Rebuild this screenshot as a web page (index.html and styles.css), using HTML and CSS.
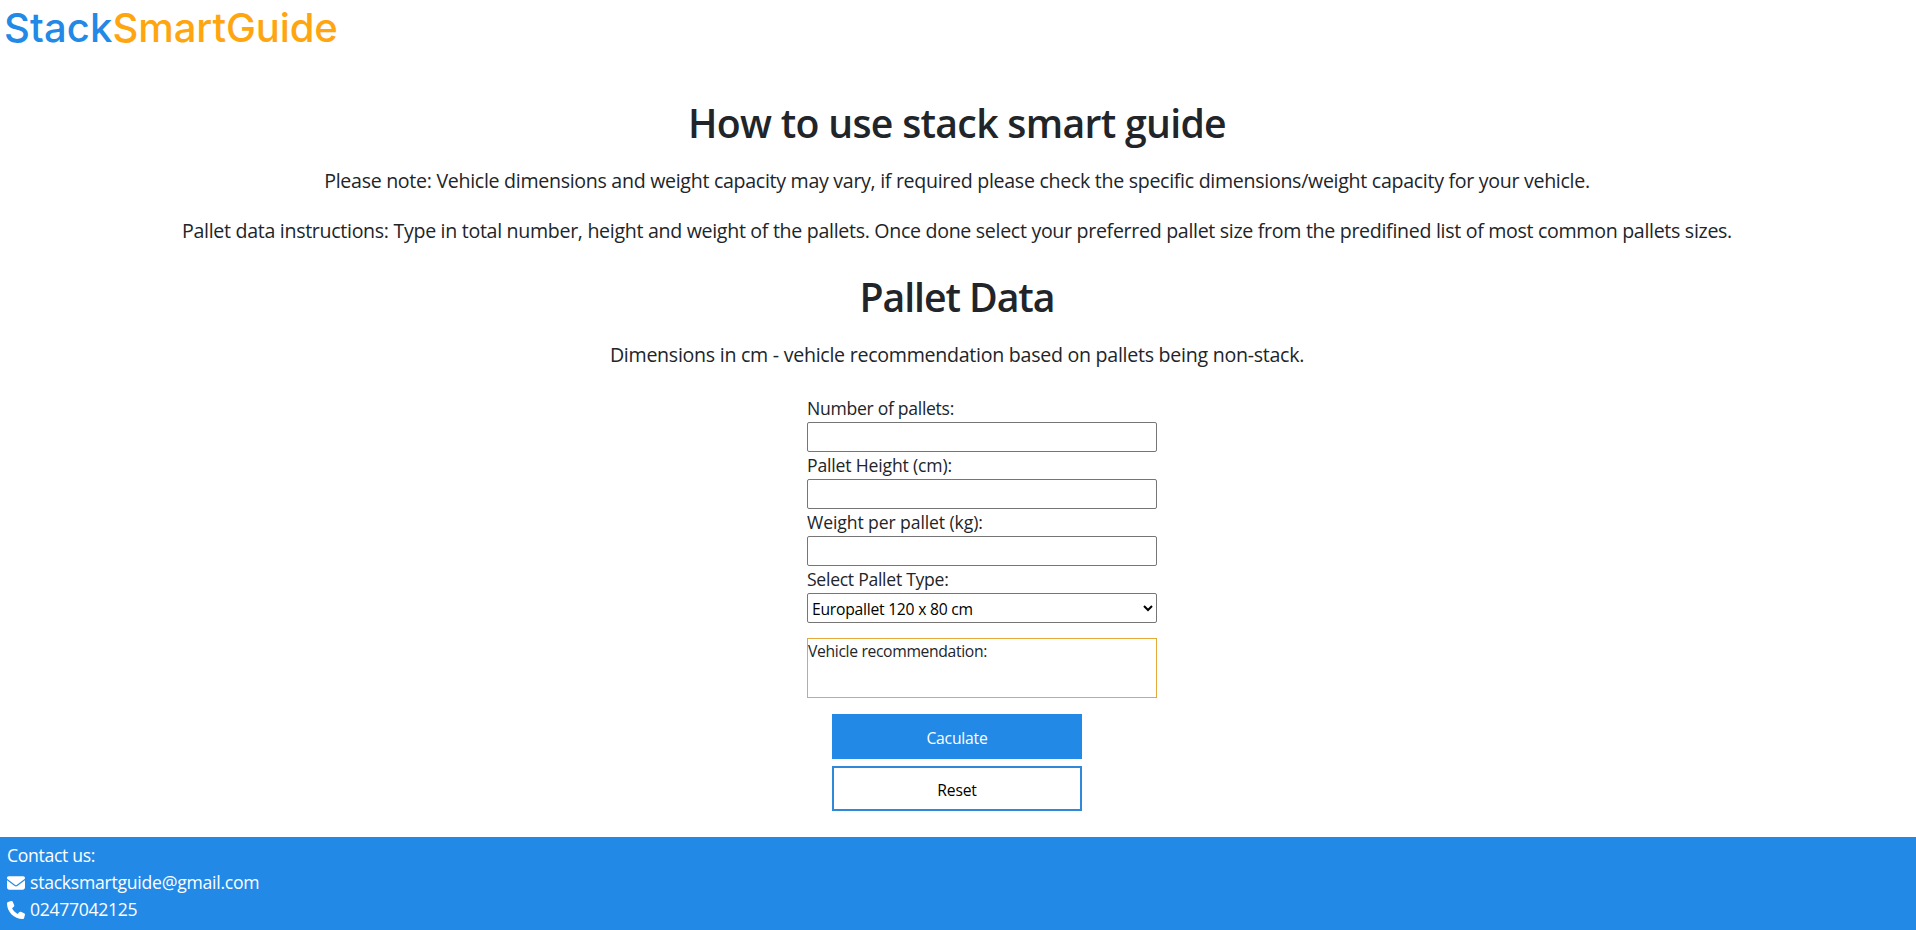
FILE: index.html
```html
<!DOCTYPE html>
<html lang="en">
<head>
<meta charset="utf-8">
<title>StackSmartGuide</title>
<link rel="stylesheet" href="styles.css">
</head>
<body>
<header class="header"><a class="logo"><span class="logo-stack">Stack</span><span class="logo-guide">SmartGuide</span></a></header>
<main class="main">
  <h1 class="title">How to use stack smart guide</h1>
  <p class="lead note">Please note: Vehicle dimensions and weight capacity may vary, if required please check the specific dimensions/weight capacity for your vehicle.</p>
  <p class="lead">Pallet data instructions: Type in total number, height and weight of the pallets. Once done select your preferred pallet size from the predifined list of most common pallets sizes.</p>
  <h2 class="title title-data">Pallet Data</h2>
  <p class="lead dimensions">Dimensions in cm - vehicle recommendation based on pallets being non-stack.</p>
  <form class="form">
    <div class="fields">
      <label class="label label-count" for="count">Number of pallets:</label>
      <input class="field" id="count" type="text">
      <label class="label label-height" for="height">Pallet Height (cm):</label>
      <input class="field" id="height" type="text">
      <label class="label label-weight" for="weight">Weight per pallet (kg):</label>
      <input class="field" id="weight" type="text">
      <label class="label label-type" for="type">Select Pallet Type:</label>
      <select class="field select" id="type"><option>Europallet 120 x 80 cm</option></select>
      <div class="result">Vehicle recommendation:</div>
    </div>
    <button class="button button-primary" type="button">Caculate</button>
    <button class="button button-outline" type="reset">Reset</button>
  </form>
</main>
<footer class="footer">
  <div class="contact">Contact us:</div>
  <div class="contact contact-email"><svg class="icon" viewBox="0 0 512 512"><path d="M48 64C21.500 64 0 85.500 0 112c0 15.100 7.100 29.300 19.200 38.400L236.800 313.600c11.400 8.500 27 8.500 38.400 0L492.800 150.400c12.100-9.100 19.200-23.300 19.200-38.400c0-26.500-21.500-48-48-48H48zM0 176V384c0 35.300 28.700 64 64 64H448c35.300 0 64-28.700 64-64V176L294.400 339.200c-22.800 17.100-54 17.100-76.800 0L0 176z"/></svg>stacksmartguide@gmail.com</div>
  <div class="contact"><svg class="icon" viewBox="0 0 512 512"><path d="M164.900 24.600c-7.700-18.600-28-28.500-47.400-23.200l-88 24C12.100 30.200 0 46 0 64C0 311.400 200.600 512 448 512c18 0 33.800-12.100 38.600-29.500l24-88c5.300-19.400-4.600-39.700-23.200-47.400l-96-40c-16.300-6.800-35.200-2.100-46.300 11.600L304.700 368C234.300 334.700 177.300 277.700 144 207.300L193.300 167c13.700-11.200 18.400-30 11.600-46.300l-40-96z"/></svg>02477042125</div>
</footer>
</body>
</html>
```
FILE: styles.css
```css
* { box-sizing: border-box; }
body {
  margin: 0;
  min-height: 930px;
  display: flex;
  flex-direction: column;
  background: #fff;
  color: #212529;
  font-family: "Open Sans", sans-serif;
  font-size: 17.6px;
  line-height: 27px;
}

.header { height: 99px; padding-left: 4px; }
.logo { display: block; font: 450 40px/56px Inter, sans-serif; letter-spacing: -0.1px; white-space: nowrap; }
.logo-stack { color: #2389e7; letter-spacing: 0.15px; }
.logo-guide { color: #ffa50f; }

.main { display: flex; flex-direction: column; align-items: center; padding-right: 2px; }
.title { margin: 0; font-size: 39.2px; line-height: 48px; font-weight: 600; letter-spacing: -0.7px; }
.title-data { margin-top: 27px; letter-spacing: -1.06px; }
.lead { margin: 20px 0 0; font-size: 19.6px; line-height: 30px; letter-spacing: -0.31px; white-space: nowrap; }
.note { margin-top: 19px; letter-spacing: -0.3px; }
.dimensions { margin-top: 19px; letter-spacing: -0.27px; }

.form { display: flex; flex-direction: column; align-items: center; width: 300px; margin-top: 25px; }
.fields { display: flex; flex-direction: column; width: 350px; margin-right: -50px; }
.label-count { letter-spacing: -0.3px; }
.label-height { letter-spacing: -0.17px; }
.label-weight { letter-spacing: -0.1px; }
.label-type { letter-spacing: -0.28px; }
.field { width: 350px; height: 30px; margin: 0; border: 1px solid #767676; border-radius: 2px; background: #fff; }
.select { padding: 1px 0 0; color: #000; font: 15.7px "Open Sans", sans-serif; letter-spacing: -0.25px; }
.result { height: 60px; margin: 15px 0 16px; border: 1px solid #e3a93a; font-size: 15.7px; line-height: 25px; letter-spacing: -0.34px; }
.button { width: 250px; height: 45px; margin: 0 0 7px; padding: 2px 0 0; border: 2px solid #2f88d8; background: #fff; color: #000; font: 15.7px "Open Sans", sans-serif; letter-spacing: -0.2px; }
.button-primary { background: #2389e7; border-color: #2389e7; color: #fff; }

.footer { margin-top: auto; height: 93px; padding: 5px 7px; background: #2389e7; color: #fff; }
.contact { display: flex; align-items: center; gap: 5px; letter-spacing: -0.32px; }
.contact-email { letter-spacing: -0.25px; }
.icon { width: 18px; height: 18px; fill: #fff; }
```
